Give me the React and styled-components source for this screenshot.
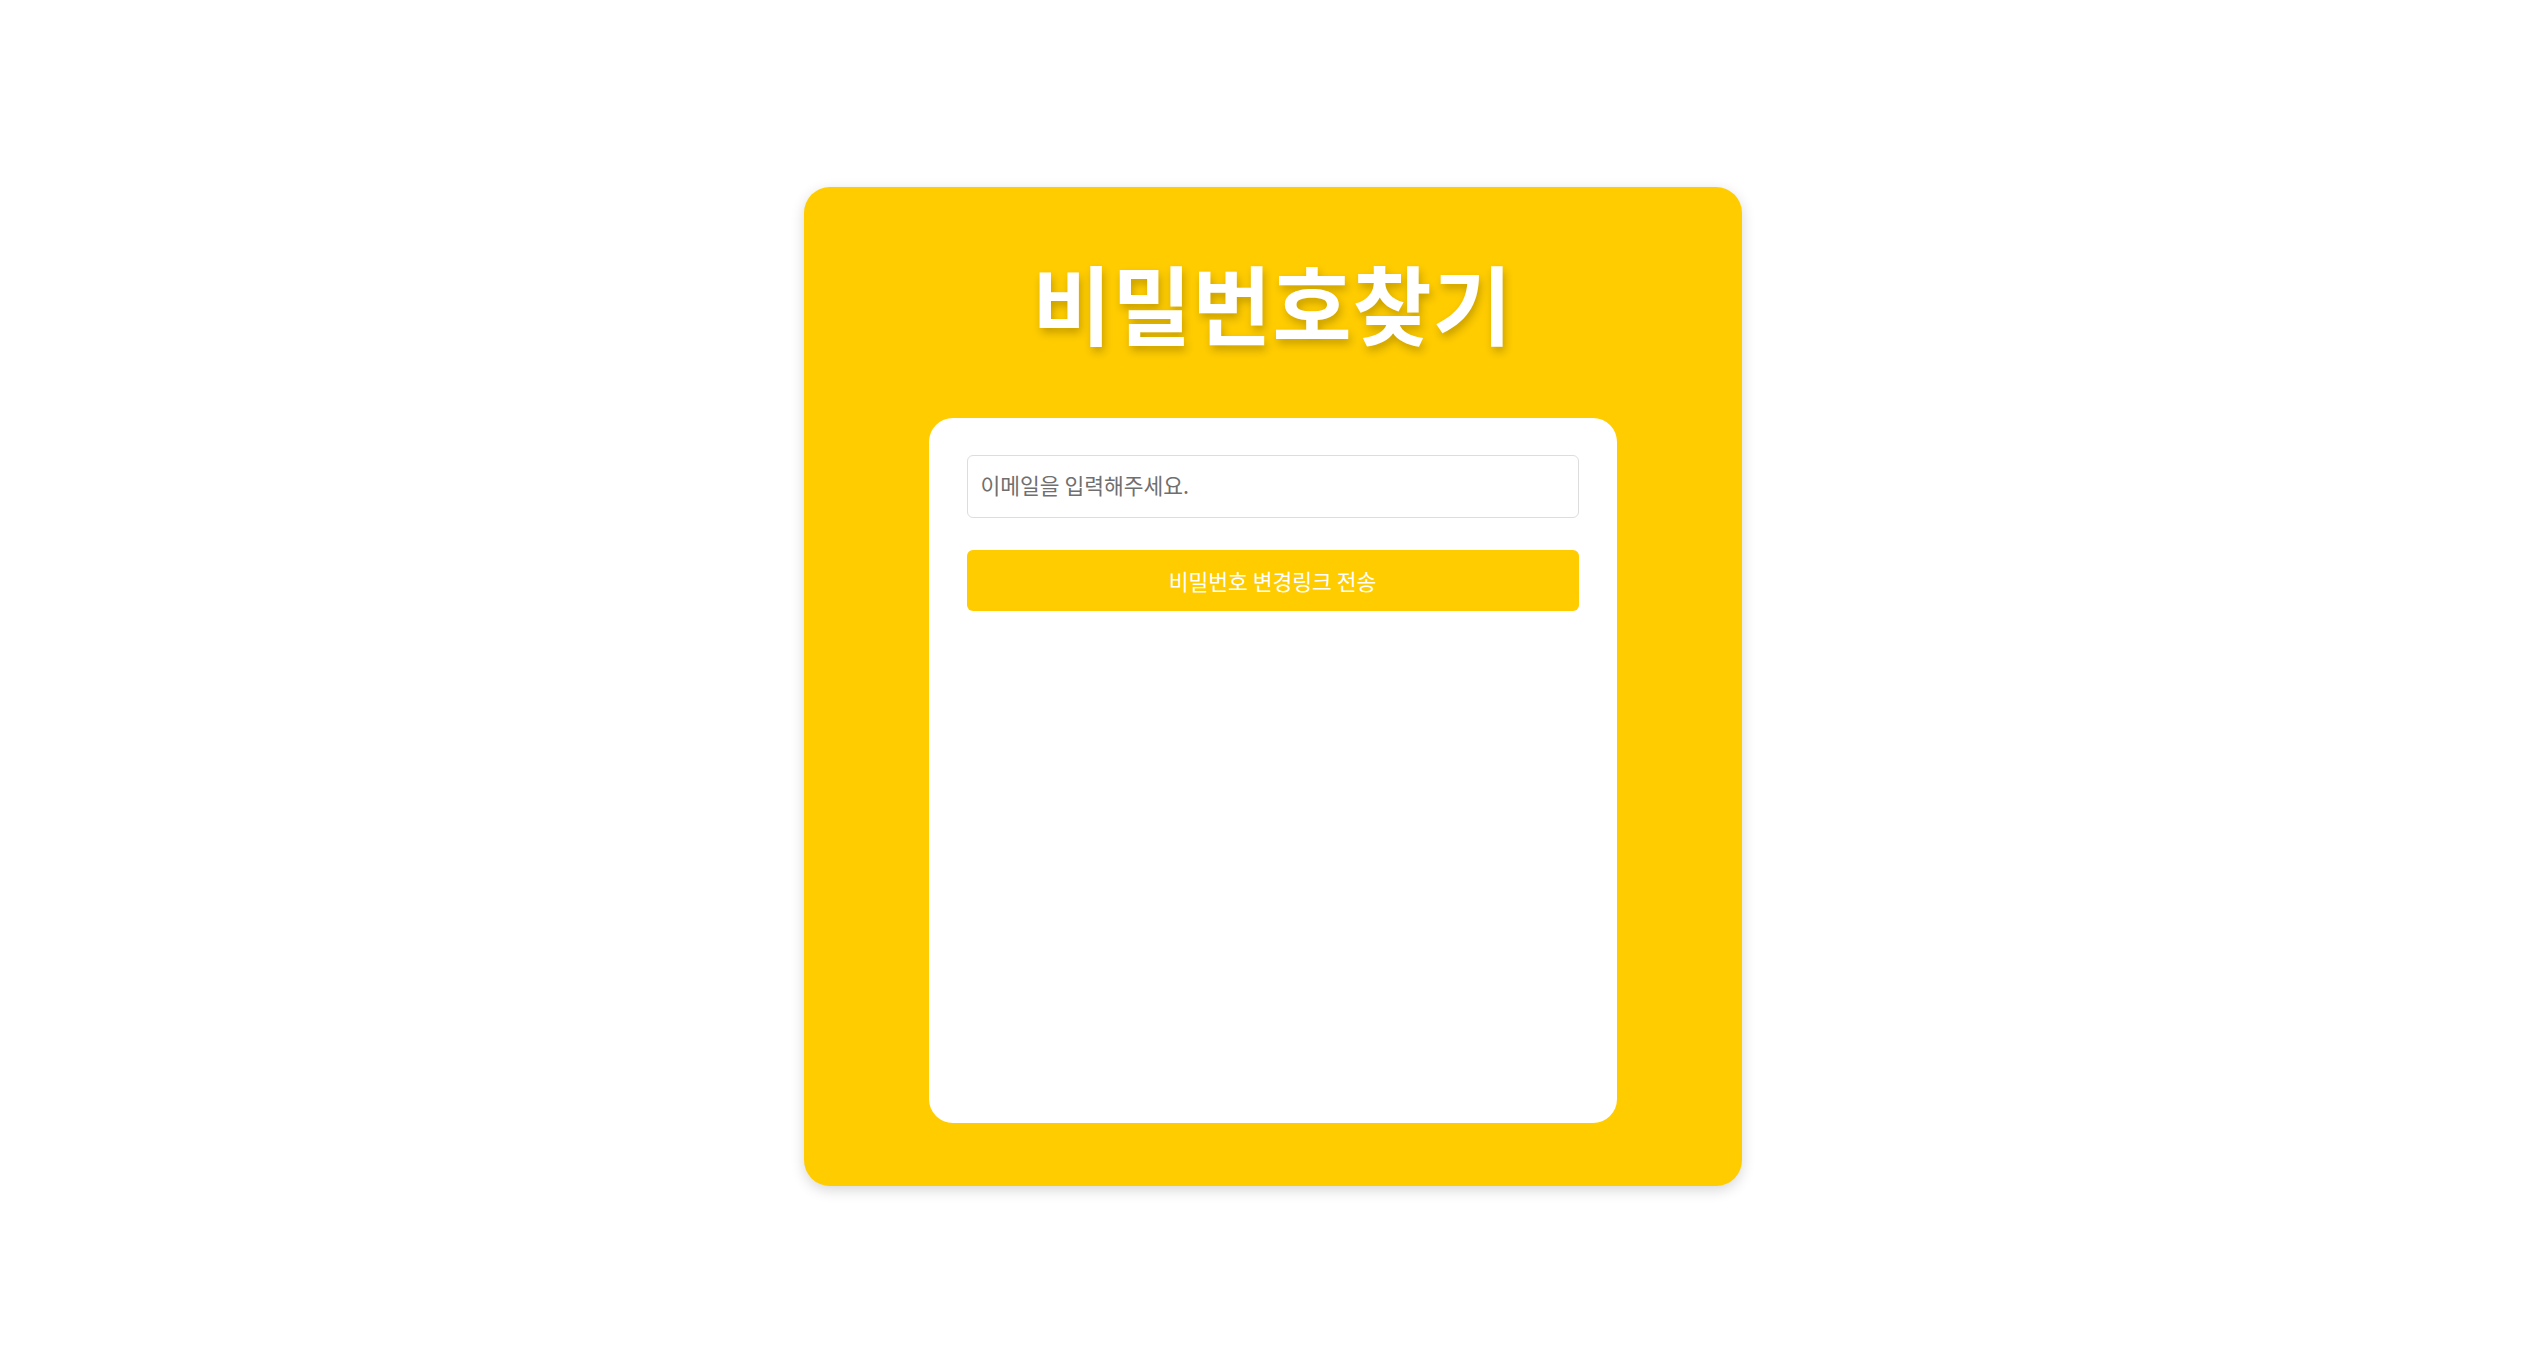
import React from 'react';
import styled, { createGlobalStyle } from 'styled-components';

const GlobalStyle = createGlobalStyle`
  html, body {
    margin: 0;
    padding: 0;
    background: #ffffff;
    font-family: "Noto Sans CJK KR", "Noto Sans", sans-serif;
  }
`;

const Page = styled.div`
  display: flex;
  justify-content: center;
  align-items: center;
  min-height: 100vh;
`;

const Card = styled.div`
  width: 938px;
  height: 999px;
  box-sizing: border-box;
  display: flex;
  flex-direction: column;
  align-items: center;
  padding: 0 125px 63px;
  background: #ffcc00;
  border-radius: 26px;
  box-shadow: 0 4px 14px rgba(0, 0, 0, 0.16);
`;

const Title = styled.h1`
  margin: 65px 0 0;
  height: 166px;
  font-size: 86px;
  line-height: 100px;
  font-weight: 700;
  color: #ffffff;
  letter-spacing: 1px;
  text-shadow: 2px 5px 8px rgba(0, 0, 0, 0.22);
`;

const Panel = styled.form`
  flex: 1;
  align-self: stretch;
  display: flex;
  flex-direction: column;
  gap: 32px;
  padding: 37px 38px;
  background: #ffffff;
  border-radius: 24px;
`;

const EmailInput = styled.input`
  height: 63px;
  box-sizing: border-box;
  padding: 0 13px 4px;
  border: 1.5px solid #dddddd;
  border-radius: 6px;
  font-family: inherit;
  font-size: 21.5px;
  font-weight: 400;
  color: #333333;
  outline: none;
  &::placeholder {
    color: #6f6f6f;
  }
`;

const SendButton = styled.button`
  height: 61px;
  border: none;
  border-radius: 6px;
  background: #ffcc00;
  color: #ffffff;
  font-family: inherit;
  font-size: 21.5px;
  font-weight: 400;
  cursor: pointer;
`;

export default function App() {
  return (
    <>
      <GlobalStyle />
      <Page>
        <Card>
          <Title>비밀번호찾기</Title>
          <Panel onSubmit={(e) => e.preventDefault()}>
            <EmailInput type="email" placeholder="이메일을 입력해주세요." />
            <SendButton type="submit">비밀번호 변경링크 전송</SendButton>
          </Panel>
        </Card>
      </Page>
    </>
  );
}
